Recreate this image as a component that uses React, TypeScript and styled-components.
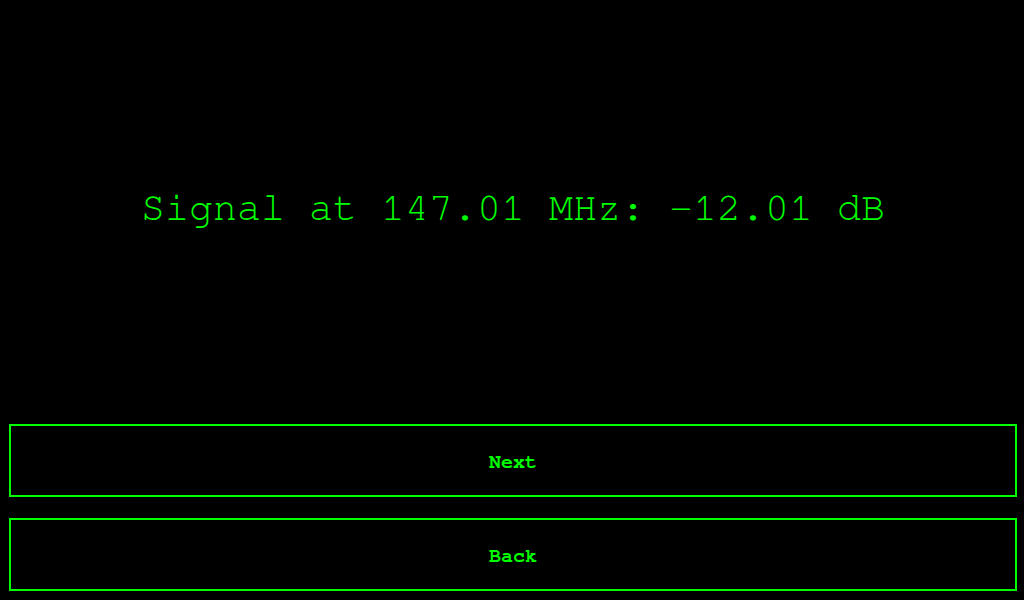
import React from "react";
import styled, { createGlobalStyle } from "styled-components";

const Global = createGlobalStyle`
  html, body { margin: 0; padding: 0; background: #000; }
  body { font-family: FreeMono, "Liberation Mono", "Courier New", monospace; }
`;

const Screen = styled.div`
  height: 600px;
  width: 1024px;
  display: flex;
  flex-direction: column;
  background: #000;
  box-sizing: border-box;
  padding: 0 7px 9px 9px;
`;

const Display = styled.div`
  flex: 1;
  display: flex;
  align-items: center;
  justify-content: center;
`;

const Reading = styled.div`
  color: #00ff00;
  font-family: FreeMono, "Liberation Mono", "Courier New", monospace;
  font-size: 40px;
  white-space: pre;
  margin-top: -8px;
`;

const Buttons = styled.div`
  display: flex;
  flex-direction: column;
  gap: 21px;
`;

const Button = styled.button`
  height: 73px;
  width: 1008px;
  background: #000;
  border: 2px solid #00ff00;
  color: #00ff00;
  font-family: FreeMono, "Liberation Mono", "Courier New", monospace;
  font-weight: bold;
  font-size: 20px;
  cursor: pointer;
  padding: 2px 0 0;
`;

export default function App() {
  return (
    <>
      <Global />
      <Screen>
        <Display>
          <Reading>Signal at 147.01 MHz: -12.01 dB</Reading>
        </Display>
        <Buttons>
          <Button>Next</Button>
          <Button>Back</Button>
        </Buttons>
      </Screen>
    </>
  );
}
